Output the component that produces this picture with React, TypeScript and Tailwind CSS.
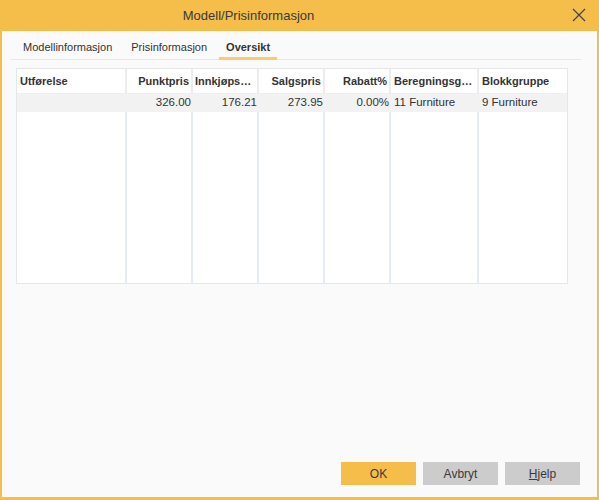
import React from "react";

const cols = [
  { title: "Utførelse", w: "w-[110px]", align: "left", value: "" },
  { title: "Punktpris", w: "w-[66px]", align: "right", value: "326.00" },
  { title: "Innkjøpspris", w: "w-[66px]", align: "right", value: "176.21" },
  { title: "Salgspris", w: "w-[66px]", align: "right", value: "273.95" },
  { title: "Rabatt%", w: "w-[66px]", align: "right", value: "0.00%" },
  { title: "Beregningsgruppe", w: "w-[88px]", align: "left", value: "11 Furniture" },
  { title: "Blokkgruppe", w: "w-[88px]", align: "left", value: "9 Furniture" },
];

export default function App() {
  return (
    <div
      className="flex h-[500px] w-[599px] flex-col border-x-[2px] border-b-[3px] border-[#f5bd4a] bg-[#fafafa] text-[#333]"
      style={{ fontFamily: '"Liberation Sans", Arial, sans-serif' }}
    >
      <header className="relative flex h-[31px] shrink-0 items-center justify-center bg-[#f5bd4a] pr-[102px]">
        <span className="text-[13px] text-[#3a3a3a]">Modell/Prisinformasjon</span>
        <button className="absolute right-[11px] top-[8px] text-[#444]">
          <svg width="14" height="14" viewBox="0 0 14 14" fill="none" stroke="currentColor" strokeWidth="1.2">
            <path d="M1 1L13 13M13 1L1 13" />
          </svg>
        </button>
      </header>

      <div className="flex flex-1 flex-col">
        <nav className="ml-[8px] mr-[16px] flex h-[29px] items-end gap-[5px] border-b border-[#e8e8e8] pl-[6px] text-[11px]">
          <Tab label="Modellinformasjon" />
          <Tab label="Prisinformasjon" />
          <Tab label="Oversikt" active />
        </nav>

        <div className="mx-[14px] mt-[8px] flex h-[216px] w-[552px] flex-col border border-[#e6e6e6] bg-white">
          <div className="flex h-[25px] shrink-0 border-b border-[#efefef] text-[11px]">
            {cols.map((c, i) => (
              <div
                key={c.title}
                className={`${c.w} flex items-center truncate px-[2px] font-bold ${c.align === "right" ? "justify-end" : "justify-start pl-[3px]"} ${i < cols.length - 1 ? "border-r-2 border-[#ececec]" : ""}`}
              >
                <span className="truncate">{c.title}</span>
              </div>
            ))}
          </div>
          <div className="flex h-[18px] shrink-0 bg-[#f2f2f2] text-[11.5px]">
            {cols.map((c) => (
              <div
                key={c.title}
                className={`${c.w} flex items-center truncate px-[2px] ${c.align === "right" ? "justify-end" : "justify-start pl-[3px]"}`}
              >
                {c.value}
              </div>
            ))}
          </div>
          <div className="flex flex-1">
            {cols.map((c, i) => (
              <div
                key={c.title}
                className={`${c.w} ${i < cols.length - 1 ? "border-r-2 border-[#e6ecf5]" : ""}`}
              />
            ))}
          </div>
        </div>

        <div className="mt-auto flex justify-end gap-[7px] pb-[12px] pr-[17px] text-[12px]">
          <button className="h-[23px] w-[75px] bg-[#f5bd4a] text-[#3a3a3a]">OK</button>
          <button className="h-[23px] w-[75px] bg-[#cccccc] text-[#3a3a3a]">Avbryt</button>
          <button className="h-[23px] w-[75px] bg-[#cccccc] text-[#3a3a3a]">
            <span className="underline">H</span>jelp
          </button>
        </div>
      </div>
    </div>
  );
}

function Tab({ label, active }: { label: string; active?: boolean }) {
  return (
    <div
      className={`-mb-px px-[7px] pb-[2px] border-b-[3px] ${active ? "border-[#f7cd72] font-bold" : "border-transparent"}`}
    >
      {label}
    </div>
  );
}
